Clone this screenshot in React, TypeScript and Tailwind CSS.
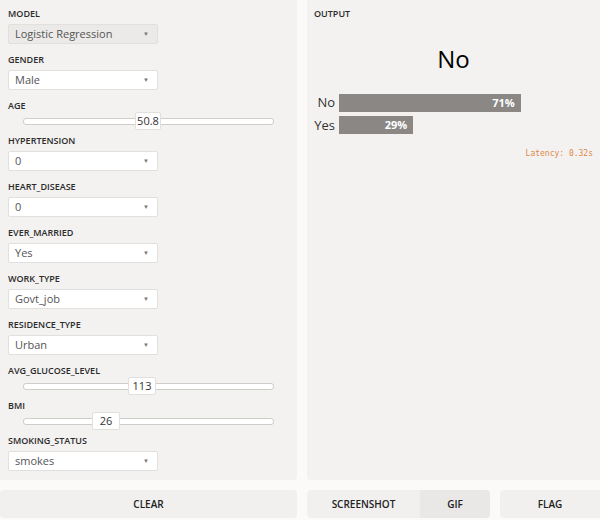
import React from "react";

const font = { fontFamily: '"Open Sans", "Noto Sans", sans-serif' };

type Field =
  | { kind: "select"; label: string; value: string; muted?: boolean }
  | { kind: "slider"; label: string; value: string; left: number; width: number };

const fields: Field[] = [
  { kind: "select", label: "MODEL", value: "Logistic Regression", muted: true },
  { kind: "select", label: "GENDER", value: "Male" },
  { kind: "slider", label: "AGE", value: "50.8", left: 112, width: 26 },
  { kind: "select", label: "HYPERTENSION", value: "0" },
  { kind: "select", label: "HEART_DISEASE", value: "0" },
  { kind: "select", label: "EVER_MARRIED", value: "Yes" },
  { kind: "select", label: "WORK_TYPE", value: "Govt_job" },
  { kind: "select", label: "RESIDENCE_TYPE", value: "Urban" },
  { kind: "slider", label: "AVG_GLUCOSE_LEVEL", value: "113", left: 105, width: 28 },
  { kind: "slider", label: "BMI", value: "26", left: 69, width: 28 },
  { kind: "select", label: "SMOKING_STATUS", value: "smokes" },
];

function Label({ text }: { text: string }) {
  return (
    <div className="h-[12px] text-[9px] leading-[12px] font-semibold text-[#2b2b2b]">
      {text}
    </div>
  );
}

function SelectBox({ value, muted }: { value: string; muted?: boolean }) {
  return (
    <div
      className={`mt-[4px] flex h-[20px] w-[150px] items-center justify-between rounded-[2px] border border-[#e2e0dd] px-[6px] text-[11px] text-[#555] ${
        muted ? "bg-[#ebeae8]" : "bg-white"
      }`}
    >
      <span>{value}</span>
      <span className="pr-[2px] text-[6px] text-[#777]">▼</span>
    </div>
  );
}

function Slider({ value, left, width }: { value: string; left: number; width: number }) {
  return (
    <div className="relative ml-[15px] h-[18px] w-[251px]">
      <div className="absolute top-[6px] h-[7px] w-full rounded-[3px] border border-[#cfcdca] bg-white" />
      <div
        className="absolute top-0 flex h-[18px] items-center justify-center rounded-[2px] border border-[#e2e0dd] bg-white text-[11px] text-[#333]"
        style={{ left, width }}
      >
        {value}
      </div>
    </div>
  );
}

export default function App() {
  return (
    <div className="h-[520px] w-[600px] bg-[#fbfaf8]" style={font}>
      <div className="flex gap-[10px]">
        <div className="h-[480px] w-[297px] rounded-br-[4px] bg-[#f3f2f1] px-[8px] pt-[8px]">
          {fields.map((f) =>
            f.kind === "select" ? (
              <div key={f.label} className="h-[46px]">
                <Label text={f.label} />
                <SelectBox value={f.value} muted={f.muted} />
              </div>
            ) : (
              <div key={f.label} className="h-[35px]">
                <Label text={f.label} />
                <Slider value={f.value} left={f.left} width={f.width} />
              </div>
            )
          )}
        </div>
        <div className="h-[480px] flex-1 rounded-bl-[4px] bg-[#f3f2f1] px-[7px] pt-[8px]">
          <Label text="OUTPUT" />
          <div className="mt-[24px] text-center text-[24px] leading-[30px] text-black">No</div>
          <div className="mt-[19px] flex flex-col gap-[3px]">
            {[
              { name: "No", pct: 71 },
              { name: "Yes", pct: 29 },
            ].map((r) => (
              <div key={r.name} className="flex items-center">
                <div className="w-[25px] pr-[4px] text-right text-[13px] text-[#333]">{r.name}</div>
                <div
                  className="flex h-[18px] items-center justify-end bg-[#8a8785] pr-[6px] text-[11px] font-bold text-white"
                  style={{ width: `${(r.pct / 100) * 256}px` }}
                >
                  {r.pct}%
                </div>
              </div>
            ))}
          </div>
          <div
            className="mt-[13px] text-right text-[8px] text-[#e0894a]"
            style={{ fontFamily: '"DejaVu Sans Mono", monospace' }}
          >
            Latency: 0.32s
          </div>
        </div>
      </div>
      <div className="mt-[10px] flex gap-[10px] text-[10px] font-semibold text-[#222]">
        <div className="flex h-[28px] w-[297px] items-center justify-center rounded-[4px] bg-[#f1f0ef]">
          CLEAR
        </div>
        <div className="flex h-[28px] w-[183px] overflow-hidden rounded-[4px]">
          <div className="flex flex-1 items-center justify-center bg-[#f1f0ef]">SCREENSHOT</div>
          <div className="flex w-[70px] items-center justify-center bg-[#e9e8e7]">GIF</div>
        </div>
        <div className="flex h-[28px] flex-1 items-center justify-center rounded-l-[4px] bg-[#f1f0ef]">
          FLAG
        </div>
      </div>
    </div>
  );
}
